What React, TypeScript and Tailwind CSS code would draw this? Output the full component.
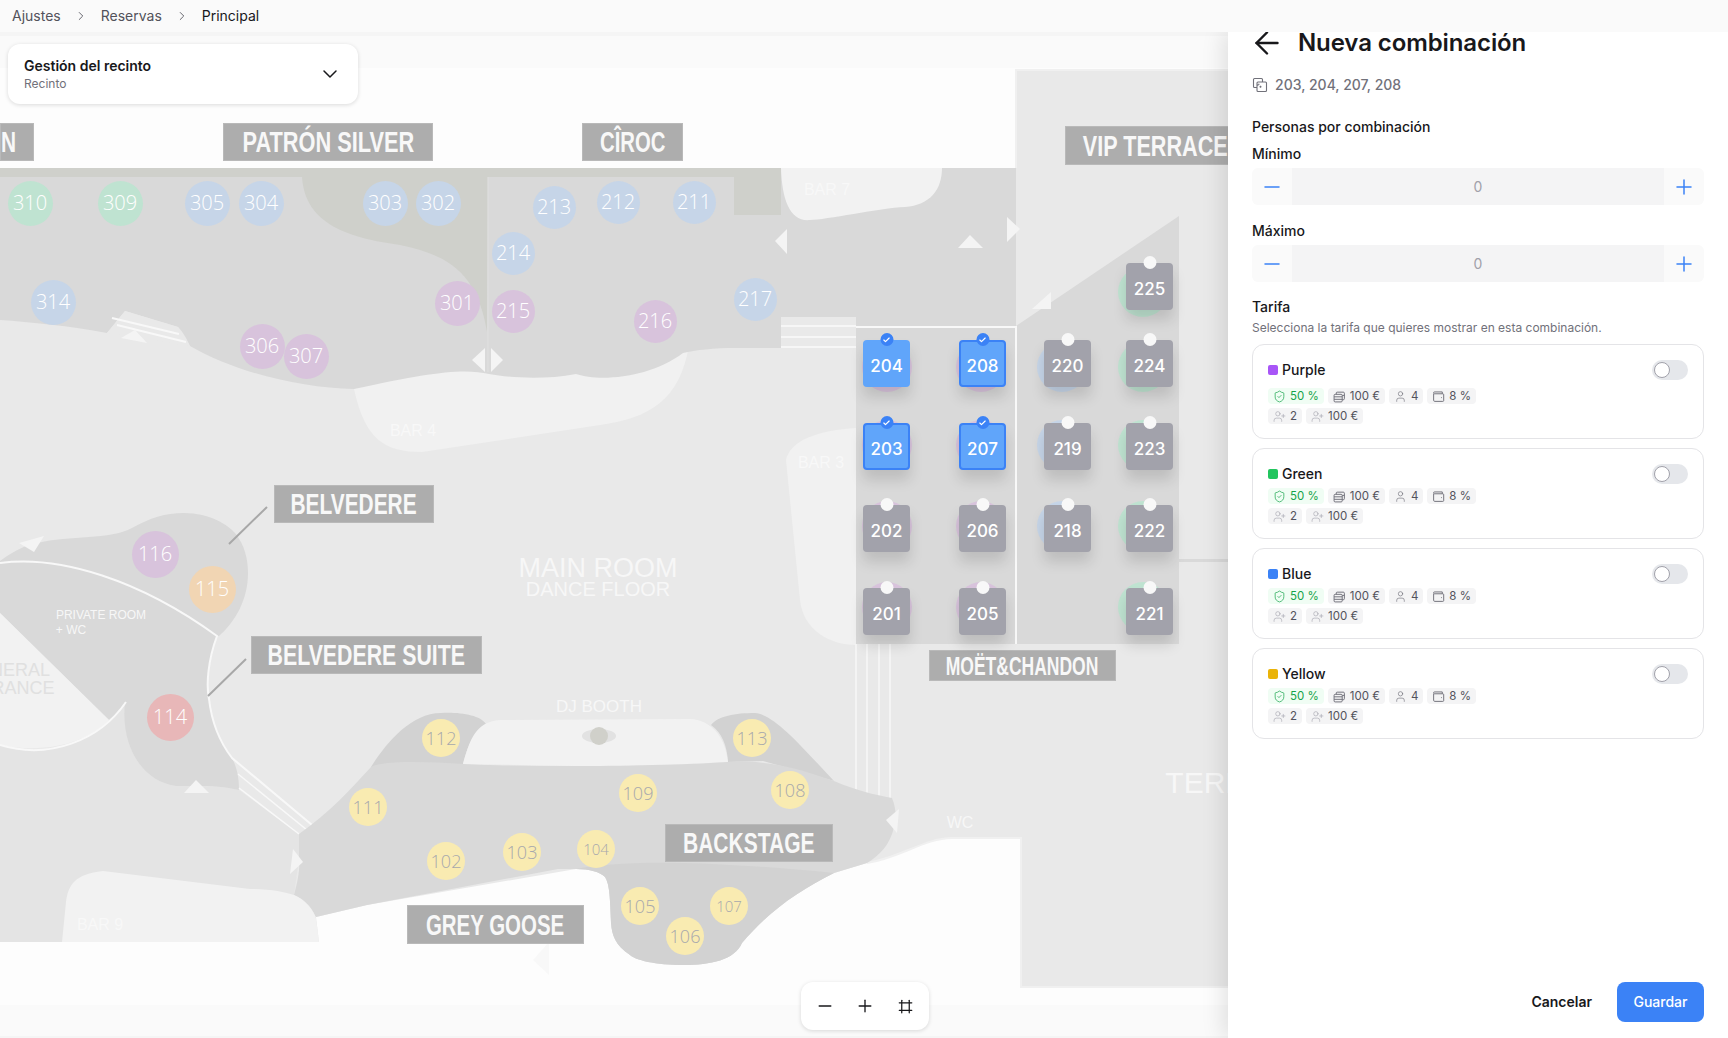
import { ArrowLeft, Check, ChevronDown, ChevronRight, Frame, Minus, Plus, ShieldCheck, User, UserPlus } from "lucide-react";

type Circle = [string, number, number, number, string];
const G = "#bfe3d1", B = "#c6d5e8", P = "#d8c3dc", O = "#f1d5b3", R = "#e8b7b8", Y = "#f9ebb1";
const circles: Circle[] = [
  ["310", 30, 203, 45, G], ["309", 120, 203, 45, G], ["305", 207, 203, 45, B], ["304", 261, 203, 45, B],
  ["303", 385, 203, 45, B], ["302", 438, 203, 45, B], ["213", 554, 207, 43, B], ["214", 513, 253, 43, B],
  ["314", 53, 302, 45, B], ["301", 457, 303, 45, P], ["215", 513, 311, 43, P], ["306", 262, 346, 45, P],
  ["307", 306, 356, 45, P], ["212", 618, 202, 43, B], ["211", 694, 202, 43, B], ["217", 755, 299, 43, B],
  ["216", 655, 321, 43, P], ["116", 155, 554, 47, P], ["115", 212, 589, 47, O], ["114", 170, 717, 47, R],
  ["112", 441, 738, 38, Y], ["111", 368, 807, 38, Y], ["102", 446, 861, 38, Y], ["103", 522, 852, 38, Y],
  ["113", 752, 738, 38, Y], ["109", 638, 793, 38, Y], ["108", 790, 790, 38, Y], ["104", 596, 849, 38, Y],
  ["105", 640, 906, 38, Y], ["107", 729, 906, 38, Y], ["106", 685, 936, 38, Y],
];

type Table = { n: string; x: number; y: number; cx: number; cy: number; tint: string; sel?: boolean; ring?: boolean };
const tables: Table[] = [
  { n: "204", x: 863, y: 340, cx: 887, cy: 367, tint: P, sel: true },
  { n: "208", x: 959, y: 340, cx: 981, cy: 367, tint: P, sel: true, ring: true },
  { n: "203", x: 863, y: 423, cx: 887, cy: 445, tint: P, sel: true, ring: true },
  { n: "207", x: 959, y: 423, cx: 981, cy: 445, tint: P, sel: true, ring: true },
  { n: "202", x: 863, y: 505, cx: 887, cy: 526, tint: P },
  { n: "206", x: 959, y: 505, cx: 981, cy: 526, tint: P },
  { n: "201", x: 863, y: 588, cx: 887, cy: 607, tint: P },
  { n: "205", x: 959, y: 588, cx: 981, cy: 607, tint: P },
  { n: "220", x: 1044, y: 340, cx: 1062, cy: 367, tint: B },
  { n: "219", x: 1044, y: 423, cx: 1062, cy: 445, tint: B },
  { n: "218", x: 1044, y: 505, cx: 1062, cy: 526, tint: B },
  { n: "225", x: 1126, y: 263, cx: 1143, cy: 292, tint: G },
  { n: "224", x: 1126, y: 340, cx: 1143, cy: 367, tint: G },
  { n: "223", x: 1126, y: 423, cx: 1143, cy: 445, tint: G },
  { n: "222", x: 1126, y: 505, cx: 1143, cy: 526, tint: G },
  { n: "221", x: 1126, y: 588, cx: 1143, cy: 607, tint: G },
];

type Sign = { t: string; x: number; y: number; w: number; h: number; sc: string; big?: boolean; left?: boolean };
const signs: Sign[] = [
  { t: "N", x: 0, y: 123, w: 34, h: 38, sc: "scale-x-[0.72]", big: true, left: true },
  { t: "PATRÓN SILVER", x: 223, y: 123, w: 210, h: 38, sc: "scale-x-[0.75]", big: true },
  { t: "CÎROC", x: 582, y: 123, w: 101, h: 38, sc: "scale-x-[0.7]", big: true },
  { t: "VIP TERRACE", x: 1065, y: 126, w: 180, h: 39, sc: "scale-x-[0.745]", big: true },
  { t: "BELVEDERE", x: 274, y: 485, w: 160, h: 38, sc: "scale-x-[0.72]", big: true },
  { t: "BELVEDERE SUITE", x: 251, y: 636, w: 231, h: 38, sc: "scale-x-[0.735]", big: true },
  { t: "MOËT&CHANDON", x: 929, y: 650, w: 187, h: 31, sc: "scale-x-[0.7]" },
  { t: "BACKSTAGE", x: 665, y: 824, w: 168, h: 38, sc: "scale-x-[0.725]", big: true },
  { t: "GREY GOOSE", x: 407, y: 905, w: 177, h: 39, sc: "scale-x-[0.705]", big: true },
];

type Note = { t: string; x: number; y: number; cls: string };
const notes: Note[] = [
  { t: "BAR 7", x: 827, y: 190, cls: "text-base text-[#f8f8f8]" },
  { t: "BAR 4", x: 413, y: 431, cls: "text-base text-[#f8f8f8]" },
  { t: "BAR 3", x: 821, y: 463, cls: "text-base text-[#f8f8f8]" },
  { t: "BAR 9", x: 100, y: 925, cls: "text-base text-[#f8f8f8]" },
  { t: "MAIN ROOM", x: 598, y: 568, cls: "text-[27px] text-[#f7f7f7]" },
  { t: "DANCE FLOOR", x: 598, y: 589, cls: "text-[20px] text-[#f7f7f7]" },
  { t: "TERRACE", x: 1237, y: 783, cls: "text-[30px] text-[#f7f7f7]" },
  { t: "WC", x: 960, y: 823, cls: "text-base text-[#f7f7f7]" },
  { t: "DJ BOOTH", x: 599, y: 706, cls: "text-[17px] text-[#f7f7f7]" },
  { t: "NERAL", x: 20, y: 670, cls: "text-lg text-[#e0e0e0]" },
  { t: "RANCE", x: 23, y: 688, cls: "text-lg text-[#e0e0e0]" },
  { t: "PRIVATE ROOM", x: 101, y: 615, cls: "text-xs text-[#f7f7f7]" },
  { t: "+ WC", x: 71, y: 630, cls: "text-xs text-[#f7f7f7]" },
];

const arrows = [
  "775,241 787,229 787,254", "958,248 970,235 983,248", "1007,217 1020,229 1007,242", "1032,309 1051,292 1051,309",
  "472,360 485,348 485,372", "491,348 503,360 491,372", "19,543 44,536 34,552", "184,793 196,780 209,793",
  "293,849 303,862 290,874", "899,809 886,820 897,833", "121,338 135,330 147,343",
];

function FloorPlan() {
  return (
    <svg viewBox="0 0 1228 1038" className="absolute inset-0 h-[1038px] w-[1228px]">
      <rect x="0" y="36" width="1228" height="32" fill="#fafafa" />
      <rect x="0" y="68" width="1228" height="937" fill="#fdfdfd" />
      <rect x="0" y="1005" width="1228" height="31" fill="#fafafa" />
      <path d="M0 168 L1016 168 L1016 70 L1228 70 L1228 987 L1021 987 L1021 838 L952 838 C925 838 900 858 867 863 L834 873 L576 869 L367 905 L316 917 L319 942 L0 942 Z" fill="#e9e9e9" />
      <path d="M1016 168 L1016 70 L1228 70 M1228 987 L1021 987 L1021 838 L952 838 C925 838 900 858 867 863" fill="none" stroke="#f0f0f0" strokeWidth="2" />
      <path d="M0 745 C40 760 95 745 126 702 C120 750 145 782 176 786 C200 786 220 785 239 790 L299 834 L299 859 L294 895 L319 942 L0 942 Z" fill="#e4e4e4" />
      <path d="M354 389 C365 440 385 452 422 452 L600 425 C650 418 680 400 689 345 L354 345 Z" fill="#f1f1f1" />
      <path d="M856 428 C820 430 790 440 786 460 L800 600 C803 630 830 645 856 645 Z" fill="#f1f1f1" />
      <path d="M0 168 L781 168 L781 348 L735 348 C715 348 695 350 683 353 C650 378 600 382 576 374 C545 380 510 378 489 374 C465 368 430 372 354 389 C300 388 235 372 190 346 C185 335 181 330 178 327 L125 311 L107 333 C70 326 30 322 0 320 Z" fill="#d9d9d9" />
      <path d="M0 168 H781 V215 H734 V177 H0 Z" fill="#cfd0cb" />
      <path d="M302 177 C305 225 350 238 400 245 C450 255 478 275 487 332 L488 177 Z" fill="#cfd0cb" />
      <path d="M488 177 V372" stroke="#e0e0e0" strokeWidth="1" />
      <path d="M107 333 L125 311 L178 327 L190 346 Z" fill="#e9e9e9" />
      <path d="M112 318 L179 334 M117 325 L186 342" stroke="#f8f8f8" strokeWidth="2" />
      <rect x="781" y="168" width="235" height="160" fill="#d9d9d9" />
      <path d="M781 168 L942 168 C942 190 930 205 905 207 C880 208 825 220 810 220 C790 222 782 200 781 168 Z" fill="#f2f2f2" />
      <rect x="781" y="317" width="75" height="32" fill="#e9e9e9" />
      <path d="M781 326 H856 M781 337 H856 M781 347 H856" stroke="#fafafa" strokeWidth="1.5" />
      <rect x="856" y="328" width="160" height="316" fill="#d9d9d9" />
      <path d="M1016 326 L1179 216 V644 H1016 Z" fill="#d9d9d9" />
      <path d="M856 327 H1016 V644" fill="none" stroke="#f8f8f8" strokeWidth="2" />
      <rect x="1179" y="559" width="49" height="3" fill="#d9d9d9" />
      <path d="M856 644 V798 M867 644 V798 M879 644 V798 M890 644 V798" stroke="#f8f8f8" strokeWidth="1.5" />
      <path d="M0 561 C15 550 30 543 37 543 C70 535 110 540 132 528 C150 518 165 513 184 513 C210 513 228 525 235 533 C245 545 248 560 248 573 C248 600 235 622 219 636 L217 636 C140 580 60 555 0 563 Z" fill="#d9d9d9" />
      <path d="M0 563 C60 555 140 580 217 636 C208 660 206 685 209 699 C212 725 222 745 232 758 C238 770 239 780 239 790 C220 785 200 786 176 786 C145 782 120 750 125 702 C120 712 115 715 109 720 L0 613 Z" fill="#d9d9d9" />
      <path d="M0 613 L109 720 C90 740 50 755 0 745 Z" fill="#f2f2f2" />
      <path d="M0 745 C50 760 100 740 126 702" fill="none" stroke="#f8f8f8" strokeWidth="2" />
      <path d="M0 563 C60 555 140 580 217 636 C208 660 206 685 209 699 C212 725 222 745 232 758 L312 825" fill="none" stroke="#f8f8f8" strokeWidth="2" />
      <path d="M238 774 L307 830 M239 788 L299 834" stroke="#f8f8f8" strokeWidth="1.5" />
      <path d="M267 507 L229 544 M246 659 L208 696" stroke="#a8a8a8" strokeWidth="2" />
      <path d="M371 767 C385 745 410 713 441 713 C460 712 480 715 486 724 C472 735 468 745 463 764 Z" fill="#d2d2d2" />
      <path d="M711 725 C718 716 735 713 755 713 C775 715 800 745 834 781 L763 761 L728 762 C727 745 722 733 711 725 Z" fill="#d2d2d2" />
      <path d="M463 764 C470 740 475 722 500 720 L690 719 C710 720 725 735 728 762 C660 767 600 766 576 766 Z" fill="#f2f2f2" />
      <path d="M299 834 C330 812 350 790 371 767 C385 760 430 762 463 764 C520 767 650 767 728 762 C760 760 790 765 834 781 C855 790 875 795 892 798 C897 810 896 820 894 827 C890 845 880 855 867 863 L834 873 C800 890 770 910 742 943 C735 960 710 965 684 965 C655 965 635 960 630 955 C615 945 612 935 611 923 C610 900 610 885 605 877 C600 872 590 869 576 869 L558 869 L367 905 L316 917 C310 905 305 900 294 895 C298 880 300 870 299 859 Z" fill="#d9d9d9" />
      <path d="M576 869 C620 860 700 860 834 873 C800 890 770 910 742 943 C735 960 710 965 684 965 C655 965 635 960 630 955 C615 945 612 935 611 923 C610 900 610 885 605 877 C600 872 590 869 576 869 Z" fill="#d2d2d2" />
      <path d="M62 942 L66 902 C68 885 75 874 103 871 L250 889 C270 889 285 892 294 895 C305 900 314 910 316 919 L319 942 Z" fill="#f2f2f2" />
      <ellipse cx="599" cy="736" rx="17" ry="7" fill="#e2e2e2" />
      <circle cx="599" cy="736" r="9" fill="#d0d0ca" />
      <polygon points="533,960 549,942 549,975" fill="#f8f8f8" />
      {arrows.map((p) => (
        <polygon key={p} points={p} fill="#f4f4f4" />
      ))}
    </svg>
  );
}

function SeatCircle({ c }: { c: Circle }) {
  const [n, x, y, d, color] = c;
  const yellow = color === Y;
  const small = n === "104" || n === "107";
  return (
    <div
      className={`absolute flex items-center justify-center rounded-full font-['Open_Sans',sans-serif] font-light ${yellow ? "text-[#a7a8ad]" : "text-white"} ${small ? "text-[15px]" : yellow ? "text-[18px]" : "text-[20px]"}`}
      style={{ left: x - d / 2, top: y - d / 2, width: d, height: d, backgroundColor: color }}
    >
      {n}
    </div>
  );
}

function SeatTable({ t }: { t: Table }) {
  return (
    <div
      className={`absolute flex h-[47px] w-[47px] items-center justify-center rounded-[4px] pt-[6px] text-[17px] font-medium text-white shadow-[0_10px_14px_rgba(0,0,0,0.13)] ${t.sel ? "bg-[#60a5fa]" : "bg-[#a2a2ab]"} ${t.ring ? "border-2 border-[#3b82f6]" : ""}`}
      style={{ left: t.x, top: t.y }}
    >
      {t.n}
      <span
        className={`absolute left-1/2 top-[-7px] flex h-[13px] w-[13px] -translate-x-1/2 items-center justify-center rounded-full ${t.sel ? "bg-[#3b82f6]" : "bg-[#f8f8f8]"} ${t.ring ? "-mt-0.5" : ""}`}
      >
        {t.sel && <Check size={8} strokeWidth={3.5} color="#fff" />}
      </span>
    </div>
  );
}

function SignBox({ s }: { s: Sign }) {
  return (
    <div
      className={`absolute flex items-center whitespace-nowrap border border-[#b9b9b9] bg-[#adadad] pt-0.5 font-['Liberation_Sans',sans-serif] font-bold text-[#f8f8f8] ${s.left ? "justify-start" : "justify-center"} ${s.big ? "text-[29px]" : "text-[25px]"}`}
      style={{ left: s.x, top: s.y, width: s.w, height: s.h }}
    >
      <span className={`inline-block ${s.sc} ${s.left ? "origin-left" : ""}`}>{s.t}</span>
    </div>
  );
}

function CombineIcon() {
  return (
    <svg width="16" height="16" viewBox="0 0 16 16" fill="none" stroke="#71717a" strokeWidth="1.1" strokeLinejoin="round">
      <path d="M5 10.5H2.5A1 1 0 0 1 1.5 9.500V2.500A1 1 0 0 1 2.500 1.500H9.500A1 1 0 0 1 10.500 2.500V5" />
      <rect x="5" y="5" width="9.500" height="9.500" rx="1" />
      <path d="M7.500 7.200H5.800M5.800 7.200V9M9.500 9.800H7.500M8.500 8.800V10.800" />
    </svg>
  );
}

function NotesIcon() {
  return (
    <svg width="13" height="13" viewBox="0 0 12 12" fill="none" stroke="#71717a" strokeWidth="0.9" strokeLinejoin="round">
      <rect x="1" y="4" width="7.500" height="7" rx="1" />
      <path d="M1 6.300H8.500M1 8.600H8.500M3 4V2.800A.8.8 0 0 1 3.800 2H9.500A1 1 0 0 1 10.500 3V8A1 1 0 0 1 9.500 9H8.500M8.500 5H10.500" />
    </svg>
  );
}

function WalletIcon() {
  return (
    <svg width="13" height="13" viewBox="0 0 12 12" fill="none" stroke="#71717a" strokeWidth="0.9" strokeLinejoin="round">
      <path d="M1.500 3.500V9.500A1 1 0 0 0 2.500 10.500H10A.8.8 0 0 0 10.800 9.700V4.300A.8.8 0 0 0 10 3.500H2.300A.8.8 0 0 1 1.500 2.700A.8.8 0 0 1 2.300 1.800H9.500V3.500" />
      <path d="M8.300 7H9" />
    </svg>
  );
}

function Chip({ icon, children, green }: { icon: React.ReactNode; children: React.ReactNode; green?: boolean }) {
  return (
    <span className={`flex h-4 items-center gap-1 rounded-[4px] px-[5px] text-[11.5px] leading-4 ${green ? "bg-[#f0fdf4] text-[#16a34a]" : "bg-[#f4f4f5] text-[#52525b]"}`}>
      {icon}
      {children}
    </span>
  );
}

function RateCard({ name, swatch, roomy }: { name: string; swatch: string; roomy?: boolean }) {
  return (
    <div className="rounded-xl border border-[#e4e4e7] px-[15px] pb-[14px] pt-[15px]">
      <div className={`flex h-5 items-center justify-between ${roomy ? "mb-2" : "mb-1"}`}>
        <div className="flex items-center gap-[4px] text-sm font-medium text-[#18181b]">
          <span className={`h-[10px] w-[10px] rounded-[2px] ${swatch}`} />
          {name}
        </div>
        <span className="flex h-5 w-9 items-center rounded-full bg-[#e5e7eb] px-0.5">
          <span className="h-4 w-4 rounded-full border border-[#a1a1aa] bg-white" />
        </span>
      </div>
      <div className="flex flex-col gap-1">
        <div className="flex gap-1">
          <Chip green icon={<ShieldCheck size={13} strokeWidth={1.3} color="#16a34a" />}>50 %</Chip>
          <Chip icon={<NotesIcon />}>100 €</Chip>
          <Chip icon={<User size={13} strokeWidth={1.2} color="#71717a" />}>4</Chip>
          <Chip icon={<WalletIcon />}>8 %</Chip>
        </div>
        <div className="flex gap-1">
          <Chip icon={<UserPlus size={13} strokeWidth={1.1} color="#a1a1aa" />}>2</Chip>
          <Chip icon={<UserPlus size={13} strokeWidth={1.1} color="#a1a1aa" />}>100 €</Chip>
        </div>
      </div>
    </div>
  );
}

function Stepper() {
  return (
    <div className="flex h-[37px] overflow-hidden rounded-md bg-[#fafafa]">
      <span className="flex w-10 items-center justify-center"><Minus size={24} strokeWidth={1.5} color="#3b82f6" /></span>
      <span className="flex flex-1 items-center justify-center bg-[#f4f4f5] text-sm text-[#a1a1aa]">0</span>
      <span className="flex w-10 items-center justify-center"><Plus size={24} strokeWidth={1.5} color="#3b82f6" /></span>
    </div>
  );
}

export default function App() {
  return (
    <div className="flex h-[1038px] w-[1728px] flex-col overflow-hidden bg-white font-['Inter',sans-serif]">
      <header className="z-20 flex h-8 shrink-0 items-center bg-[#fafafa] pl-3 text-sm text-[#52525b]">
        <span>Ajustes</span>
        <ChevronRight size={14} strokeWidth={1.5} className="ml-[13px] mr-[13px]" />
        <span>Reservas</span>
        <ChevronRight size={14} strokeWidth={1.5} className="ml-[13px] mr-[13px]" />
        <span className="text-[#18181b]">Principal</span>
      </header>

      <div className="flex min-h-0 flex-1">
        <main className="relative flex-1 overflow-hidden bg-[#f5f5f5]">
          <div className="absolute left-0 top-[-32px] h-[1038px] w-[1228px]">
            <FloorPlan />
            {notes.map((n) => (
              <span
                key={n.t}
                className={`absolute -translate-x-1/2 -translate-y-1/2 whitespace-nowrap font-['Liberation_Sans',sans-serif] leading-none ${n.cls}`}
                style={{ left: n.x, top: n.y }}
              >
                {n.t}
              </span>
            ))}
            {signs.map((s) => (
              <SignBox key={s.t} s={s} />
            ))}
            {circles.map((c) => (
              <SeatCircle key={c[0]} c={c} />
            ))}
            {tables.map((t) => (
              <div
                key={t.n}
                className="absolute h-[50px] w-[50px] rounded-full"
                style={{ left: t.cx - 25, top: t.cy - 25, backgroundColor: t.tint }}
              />
            ))}
            {tables.map((t) => (
              <SeatTable key={t.n} t={t} />
            ))}
          </div>

          <div className="absolute left-2 top-3 flex h-[60px] w-[350px] items-center justify-between rounded-xl bg-white pl-4 pr-4 shadow-[0_1px_4px_rgba(0,0,0,0.14)]">
            <div>
              <div className="text-sm font-semibold leading-5 text-[#18181b]">Gestión del recinto</div>
              <div className="text-xs leading-4 text-[#71717a]">Recinto</div>
            </div>
            <ChevronDown size={24} strokeWidth={1.5} color="#18181b" />
          </div>

          <div className="absolute bottom-2 left-[801px] flex h-12 w-32 items-center justify-center rounded-xl bg-white shadow-[0_1px_4px_rgba(0,0,0,0.14)]">
            <span className="flex w-10 justify-center"><Minus size={20} strokeWidth={1.6} color="#18181b" /></span>
            <span className="flex w-10 justify-center"><Plus size={20} strokeWidth={1.6} color="#18181b" /></span>
            <span className="flex w-10 justify-center"><Frame size={15} strokeWidth={2} color="#18181b" /></span>
          </div>
        </main>

        <aside className="z-10 flex w-[500px] shrink-0 flex-col overflow-hidden bg-white px-6 shadow-[-6px_0_20px_rgba(0,0,0,0.1)]">
          <div className="-mt-[5px] flex h-8 items-center gap-[13px] text-2xl font-semibold leading-8 tracking-[-0.1px] text-[#18181b]">
            <ArrowLeft size={36} strokeWidth={1.6} className="-ml-[3px]" />
            <span>Nueva combinación</span>
          </div>
          <div className="mt-4 flex h-5 items-center gap-[7px] text-sm font-medium text-[#71717a]">
            <CombineIcon />
            203, 204, 207, 208
          </div>
          <h2 className="mt-[22px] text-sm font-medium leading-5 text-[#18181b]">Personas por combinación</h2>
          <label className="mt-[7px] block text-sm font-medium leading-5 text-[#18181b]">Mínimo</label>
          <div className="mt-1"><Stepper /></div>
          <label className="mt-4 block text-sm font-medium leading-5 text-[#18181b]">Máximo</label>
          <div className="mt-1"><Stepper /></div>
          <h2 className="mt-[15px] text-sm font-medium leading-5 text-[#18181b]">Tarifa</h2>
          <p className="mt-[3px] text-xs leading-4 text-[#71717a]">Selecciona la tarifa que quieres mostrar en esta combinación.</p>
          <div className="mt-2 flex flex-col gap-[9px]">
            <RateCard name="Purple" swatch="bg-[#a855f7]" roomy />
            <RateCard name="Green" swatch="bg-[#22c55e]" />
            <RateCard name="Blue" swatch="bg-[#3b82f6]" />
            <RateCard name="Yellow" swatch="bg-[#eab308]" />
          </div>
          <div className="mb-4 mt-auto flex items-center justify-end gap-[25px]">
            <button className="text-sm font-semibold text-[#18181b]">Cancelar</button>
            <button className="h-10 w-[87px] rounded-lg bg-[#3b82f6] text-sm font-medium text-white">Guardar</button>
          </div>
        </aside>
      </div>
    </div>
  );
}
